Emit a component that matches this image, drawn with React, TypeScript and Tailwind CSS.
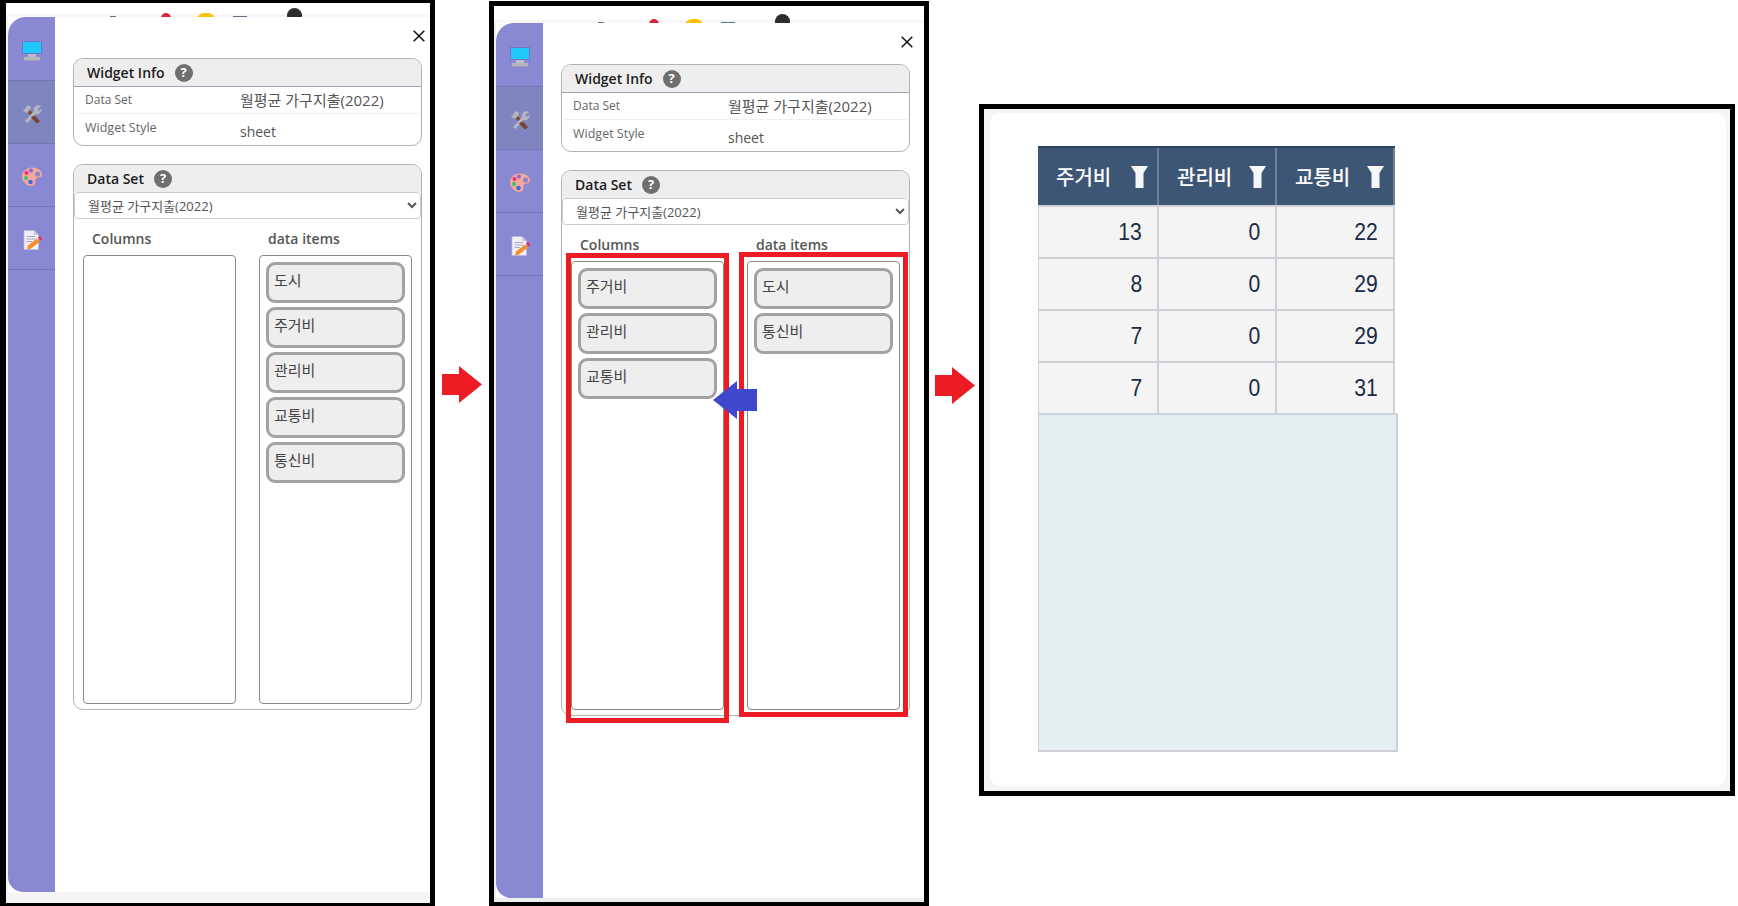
const FONT = "font-['Open_Sans','Noto_Sans_CJK_KR',sans-serif]";

function MonitorIcon() {
  return (
    <svg width="20" height="20" viewBox="0 0 20 20">
      <rect x="0.5" y="0.5" width="19" height="12" fill="#1fc9fb" stroke="#6f74c4" />
      <rect x="6" y="13" width="8" height="3" fill="#b9bcc6" />
      <rect x="2" y="16" width="16" height="3.5" rx="1" fill="#b4b6ba" />
    </svg>
  );
}

function ToolsIcon() {
  return (
    <svg width="20" height="20" viewBox="0 0 20 20">
      <path d="M6 4 L18 17 L16 19 L4 7 Z" fill="#7a4a3a" />
      <path d="M1 7 L6 1 L9 3 L8 6 L5 9 L3 8 Z" fill="#b5b5c0" />
      <path d="M3 17 L12 7 C11 3 15 0 19 2 L15.5 5 L17 7 L19.5 4.5 C20 9 16 11 13.5 10 L5.5 19 Z" fill="#b5b5c0" />
      <path d="M10.5 12 L16.5 18 L15 19.5 L9 13.5 Z" fill="#7a4030" />
    </svg>
  );
}

function PaletteIcon() {
  return (
    <svg width="20" height="20" viewBox="0 0 20 20">
      <path
        d="M10 0.5 C15.5 0.5 20 3.5 20 7.5 C20 11 15.5 10 14 11.5 C12.5 13 14.5 15 12.5 17.5 C11 19.5 7 19.5 4 17 C1 15 0 12 0 9.5 C0 4 5 0.5 10 0.5 Z"
        fill="#f5a99c"
      />
      <circle cx="4.5" cy="6" r="2" fill="#e8307f" />
      <circle cx="9" cy="3.5" r="2" fill="#8b63d8" />
      <circle cx="15.5" cy="7" r="2.5" fill="#8a86c8" />
      <circle cx="4" cy="11" r="2" fill="#2fc76a" />
      <circle cx="8.5" cy="15" r="2.3" fill="#4466e0" />
    </svg>
  );
}

function DocIcon() {
  return (
    <svg width="20" height="20" viewBox="0 0 20 20">
      <path d="M1 0.5 H11 L15.5 5 V19.5 H1 Z" fill="#f1eff4" stroke="#b9b6d8" strokeWidth="0.7" />
      <path d="M11 0.5 L15.5 5 H11 Z" fill="#c9c6dc" />
      <path d="M3.5 6.5 H12 M3.5 9 H12 M3.5 11.5 H9" stroke="#a8a5c4" strokeWidth="1" />
      <path d="M5 15.5 L14 8.5 L17 11.5 L8 18.5 L4 19.5 Z" fill="#f78d2e" />
      <path d="M15 7.5 L17 6 L19.5 8.5 L17.5 10.5 Z" fill="#ea2d6a" />
    </svg>
  );
}

function CloseIcon() {
  return (
    <svg width="12" height="12" viewBox="0 0 12 12" className="block">
      <path d="M0.7 0.7 L11.3 11.3 M11.3 0.7 L0.7 11.3" stroke="#111" strokeWidth="1.5" />
    </svg>
  );
}

function FunnelIcon() {
  return (
    <svg width="17" height="22" viewBox="0 0 17 22" className="block">
      <path d="M0 0 H17 L12.5 7 V22 H4.5 V7 Z" fill="#f6f7f8" />
    </svg>
  );
}

function BlockArrow({ color }: { color: string }) {
  return (
    <svg width="40" height="37" viewBox="0 0 40 37" className="block">
      <path d="M0 8 H17 V0 L40 18.5 L17 37 V29 H0 Z" fill={color} />
    </svg>
  );
}

function HelpDot() {
  return (
    <span className="flex h-[18px] w-[18px] items-center justify-center rounded-full bg-[#6f6f6f] text-[13px] font-bold text-white">
      ?
    </span>
  );
}

function DragItem({ label }: { label: string }) {
  return (
    <div className="flex h-[41px] items-center rounded-[9px] border-[3px] border-[#a2a2a2] bg-[#eeeeee] pb-[5px] pl-[5px] text-[15px] text-[#444]">
      {label}
    </div>
  );
}

function ItemList({ items }: { items: string[] }) {
  return (
    <div className="flex h-full w-[153px] flex-col gap-1 rounded-[4px] border border-[#8a8a8a] bg-white px-[6px] pt-[6px]">
      {items.map((item) => (
        <DragItem key={item} label={item} />
      ))}
    </div>
  );
}

const TABS = [
  { icon: <MonitorIcon />, active: false, left: "ml-0" },
  { icon: <ToolsIcon />, active: true, left: "ml-0" },
  { icon: <PaletteIcon />, active: false, left: "ml-0" },
  { icon: <DocIcon />, active: false, left: "ml-[2px]" },
];

function Sidebar() {
  return (
    <aside className="w-[47px] shrink-0 rounded-tl-[18px] rounded-bl-[15px] bg-[#8989d3] pt-[1px]">
      {TABS.map((tab, i) => (
        <div
          key={i}
          className={`flex h-[63px] items-center justify-center border-b border-[#7076b8] pt-[3px] ${
            tab.active ? "bg-[#7f86bf]" : ""
          }`}
        >
          <div className={tab.left}>{tab.icon}</div>
        </div>
      ))}
    </aside>
  );
}

function SettingsDialog({
  columns,
  dataItems,
  closeOffset,
}: {
  columns: string[];
  dataItems: string[];
  closeOffset: string;
}) {
  return (
    <div className={`relative flex h-[875px] bg-white ${FONT}`}>
      <Sidebar />
      <div className="ml-[18px] w-[349px] pt-[41px]">
        <section className="h-[88px] overflow-hidden rounded-[10px] border border-[#b2b2b2]">
          <header className="flex h-[28px] items-center gap-[10px] border-b border-[#9aa4b2] bg-[#eeeeee] pl-[13px]">
            <h2 className="text-[14px] font-semibold leading-none text-[#1c1c1c]">Widget Info</h2>
            <HelpDot />
          </header>
          <div className="mx-[2px] flex h-[27px] items-center border-b border-[#eeeeee] pl-[9px] text-[12px] text-[#666]">
            <span className="w-[155px]">Data Set</span>
            <span className="pt-[1px] text-[15px] text-[#555]">월평균 가구지출(2022)</span>
          </div>
          <div className="mx-[2px] flex h-[31px] items-center pb-[2px] pl-[9px] text-[12.5px] text-[#666]">
            <span className="w-[155px]">Widget Style</span>
            <span className="pt-[5px] text-[14px] text-[#555]">sheet</span>
          </div>
        </section>

        <section className="mt-[18px] flex h-[546px] flex-col rounded-[10px] border border-[#b2b2b2]">
          <header className="flex h-[27px] shrink-0 items-center gap-[10px] rounded-t-[10px] bg-[#eeeeee] pl-[13px]">
            <h2 className="text-[14px] font-semibold leading-none text-[#1c1c1c]">Data Set</h2>
            <HelpDot />
          </header>
          <select
            defaultValue="a"
            className="h-[27px] shrink-0 rounded-[4px] border border-[#cccccc] bg-white pl-[9px] text-[13px] text-[#555]"
          >
            <option value="a">월평균 가구지출(2022)</option>
          </select>
          <div className="flex h-[36px] shrink-0 items-center pt-[2px] text-[14px] font-semibold text-[#555]">
            <span className="ml-[18px] w-[176px]">Columns</span>
            <span>data items</span>
          </div>
          <div className="flex min-h-0 flex-1 gap-[23px] pb-[5px] pl-[9px]">
            <ItemList items={columns} />
            <ItemList items={dataItems} />
          </div>
        </section>
      </div>
      <button className={`absolute top-[13px] ${closeOffset}`}>
        <CloseIcon />
      </button>
    </div>
  );
}

function PeekStrip({ height }: { height: string }) {
  return (
    <div className={`relative overflow-hidden bg-white ${height}`}>
      <div className="absolute bottom-0 left-0 right-0 h-[3px] bg-[#f7f7f7]" />
      <div className="absolute -bottom-[1px] left-[104px] h-[2px] w-[6px] bg-[#5d7088]" />
      <div className="absolute -bottom-[6px] left-[155px] h-[10px] w-[10px] rounded-full bg-[#d9263f]" />
      <div className="absolute -bottom-[10px] left-[191px] h-[14px] w-[18px] rounded-full bg-[#ffc107]" />
      <div className="absolute -bottom-[1px] left-[227px] h-[2px] w-[14px] bg-[#5d7088]" />
      <div className="absolute -bottom-[6px] left-[281px] h-[15px] w-[15px] rounded-full bg-[#2c2c2c]" />
    </div>
  );
}

const ROWS = [
  [13, 0, 22],
  [8, 0, 29],
  [7, 0, 29],
  [7, 0, 31],
];

function SheetWidget() {
  return (
    <div className="w-[360px] font-['Noto_Sans_CJK_KR','Liberation_Sans',sans-serif]">
      <div className="grid h-[59px] w-[357px] grid-cols-[121px_118px_118px] border-t-2 border-[#2a4460] bg-[#3e5675]">
        {["주거비", "관리비", "교통비"].map((name) => (
          <div
            key={name}
            className="flex items-center justify-between border-r-2 border-[#6f8196] pl-[18px] pr-[9px] text-[20px] font-medium leading-none text-white"
          >
            <span>{name}</span>
            <FunnelIcon />
          </div>
        ))}
      </div>
      {ROWS.map((row, r) => (
        <div
          key={r}
          className="grid h-[52px] w-[357px] grid-cols-[121px_118px_118px] border-t-2 border-[#d0d0d8] bg-[#f4f4f4]"
        >
          {row.map((value, c) => (
            <div
              key={c}
              className="flex items-center justify-end border-r-2 border-[#d0d0d8] pr-[15px] font-['Liberation_Sans',sans-serif] text-[24px] leading-none text-[#1b2b45] first:border-l-[1px]"
            >
              <span className="origin-right scale-x-[0.88]">{value}</span>
            </div>
          ))}
        </div>
      ))}
      <div className="h-[339px] border-t-2 border-r-2 border-b-2 border-l border-[#ced1d7] bg-[#e4eff1]" />
    </div>
  );
}

export default function App() {
  return (
    <div className="flex h-[906px] w-[1738px] items-start overflow-hidden bg-white">
      {/* before */}
      <div className="h-[906px] w-[435px] shrink-0 border-t-[3px] border-r-[5px] border-b-[3px] border-l-[6px] border-black bg-[#f5f5f5]">
        <PeekStrip height="h-[14px]" />
        <div className="pl-[2px]">
          <SettingsDialog
            closeOffset="right-[5px]"
            columns={[]}
            dataItems={["도시", "주거비", "관리비", "교통비", "통신비"]}
          />
        </div>
      </div>

      <div className="ml-[7px] mt-[366px] shrink-0">
        <BlockArrow color="#ed1c24" />
      </div>

      {/* after moving columns */}
      <div className="relative ml-[7px] mt-[1px] h-[905px] w-[440px] shrink-0 border-t-[5px] border-r-[5px] border-b-[4px] border-l-[5px] border-black bg-[#eeeeee]">
        <PeekStrip height="h-[17px]" />
        <div className="pl-[2px]">
          <SettingsDialog
            closeOffset="right-[11px]"
            columns={["주거비", "관리비", "교통비"]}
            dataItems={["도시", "통신비"]}
          />
        </div>
        <div className="absolute left-[72px] top-[247px] h-[470px] w-[163px] border-[5px] border-[#ed1c24]" />
        <div className="absolute left-[245px] top-[246px] h-[465px] w-[169px] border-[5px] border-[#ed1c24]" />
        <div className="absolute left-[219px] top-[375px]">
          <svg width="44" height="38" viewBox="0 0 44 38" className="block">
            <path d="M44 8 H24 V0 L0 19 L24 38 V30 H44 Z" fill="#3f48cc" />
          </svg>
        </div>
      </div>

      <div className="ml-[6px] mt-[367px] shrink-0">
        <BlockArrow color="#ed1c24" />
      </div>

      {/* result sheet */}
      <div className="ml-[4px] mt-[104px] h-[692px] w-[756px] shrink-0 border-[5px] border-black bg-[#f4f5f7] pb-[5px] pl-[6px] pr-[4px] pt-[4px]">
        <div className="h-full rounded-[10px] bg-white pl-[48px] pt-[33px]">
          <SheetWidget />
        </div>
      </div>
    </div>
  );
}
